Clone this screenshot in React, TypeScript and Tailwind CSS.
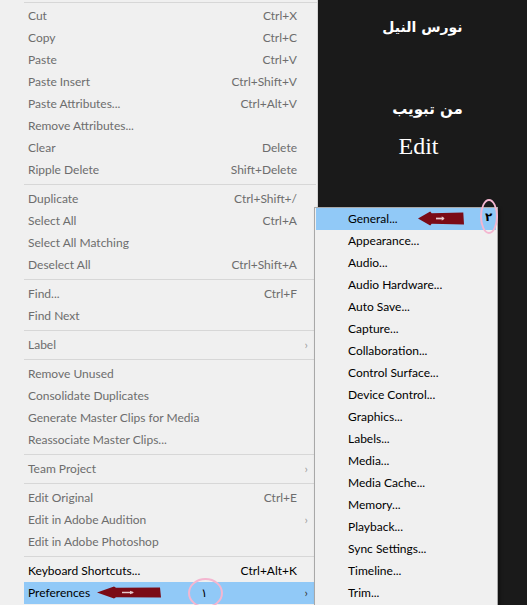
import React from 'react';

type Item =
  | { sep: true }
  | { label: string; shortcut?: string; sub?: boolean; dark?: boolean; active?: boolean };

const leftItems: Item[] = [
  { label: 'Cut', shortcut: 'Ctrl+X' },
  { label: 'Copy', shortcut: 'Ctrl+C' },
  { label: 'Paste', shortcut: 'Ctrl+V' },
  { label: 'Paste Insert', shortcut: 'Ctrl+Shift+V' },
  { label: 'Paste Attributes...', shortcut: 'Ctrl+Alt+V' },
  { label: 'Remove Attributes...' },
  { label: 'Clear', shortcut: 'Delete' },
  { label: 'Ripple Delete', shortcut: 'Shift+Delete' },
  { sep: true },
  { label: 'Duplicate', shortcut: 'Ctrl+Shift+/' },
  { label: 'Select All', shortcut: 'Ctrl+A' },
  { label: 'Select All Matching' },
  { label: 'Deselect All', shortcut: 'Ctrl+Shift+A' },
  { sep: true },
  { label: 'Find...', shortcut: 'Ctrl+F' },
  { label: 'Find Next' },
  { sep: true },
  { label: 'Label', sub: true },
  { sep: true },
  { label: 'Remove Unused' },
  { label: 'Consolidate Duplicates' },
  { label: 'Generate Master Clips for Media' },
  { label: 'Reassociate Master Clips...' },
  { sep: true },
  { label: 'Team Project', sub: true },
  { sep: true },
  { label: 'Edit Original', shortcut: 'Ctrl+E' },
  { label: 'Edit in Adobe Audition', sub: true },
  { label: 'Edit in Adobe Photoshop' },
  { sep: true },
  { label: 'Keyboard Shortcuts...', shortcut: 'Ctrl+Alt+K', dark: true },
  { label: 'Preferences', sub: true, dark: true, active: true },
];

const prefs = [
  'General...',
  'Appearance...',
  'Audio...',
  'Audio Hardware...',
  'Auto Save...',
  'Capture...',
  'Collaboration...',
  'Control Surface...',
  'Device Control...',
  'Graphics...',
  'Labels...',
  'Media...',
  'Media Cache...',
  'Memory...',
  'Playback...',
  'Sync Settings...',
  'Timeline...',
  'Trim...',
];

function Arrow({ className }: { className?: string }) {
  return (
    <svg viewBox="0 0 64 14" className={className} preserveAspectRatio="none">
      <path d="M0 7 L17 0.5 L19 2 L63 1.5 L64 12.5 L19 12 L17 13.5 Z" fill="#7b0b16" />
      <path d="M25 7 L36 7" stroke="#e8c9cc" strokeWidth="1.6" />
      <path d="M33 5 L37 7 L33 9" fill="#e8c9cc" />
    </svg>
  );
}

export default function App() {
  return (
    <div
      className="relative w-[527px] h-[605px] overflow-hidden bg-[#1a1a1a] flex"
      style={{ fontFamily: '"Segoe UI", Lato, "Noto Sans", sans-serif' }}
    >
      <div className="w-[318px] h-full bg-[#f0f0f0] border-r border-[#d4d4d4] flex flex-col text-[12px]">
        <div className="h-[5px] pl-[24px] pt-[2px]">
          <div className="h-px bg-[#d7d7d7]" />
        </div>
        {leftItems.map((it, i) =>
          'sep' in it ? (
            <div key={i} className="h-[7px] pl-[24px] pr-[1px] flex items-center">
              <div className="h-px w-full bg-[#d7d7d7]" />
            </div>
          ) : (
            <div
              key={i}
              className={`relative h-[22px] ml-[24px] mr-[3px] flex items-center pl-[4px] pr-[17px] ${
                it.active ? 'bg-[#91c9f7]' : ''
              } ${it.dark ? 'text-[#000000]' : 'text-[#6d6d6d]'}`}
            >
              <span className="flex-1 whitespace-nowrap">{it.label}</span>
              {it.shortcut && <span className="whitespace-nowrap">{it.shortcut}</span>}
              {it.sub && (
                <span className={`absolute right-[6px] text-[12px] ${it.dark ? 'text-[#333]' : 'text-[#a0a0a0]'}`}>
                  ›
                </span>
              )}
              {it.active && (
                <>
                  <Arrow className="absolute left-[73px] top-[4px] w-[64px] h-[13px]" />
                  <span className="absolute left-[164px] top-[-4px] w-[35px] h-[30px] rounded-[50%] border-2 border-[#f4b6d0]" />
                  <span className="absolute left-[177px] top-[2px] text-[12px] text-[#000]" style={{ fontFamily: '"DejaVu Sans", sans-serif' }}>
                    ١
                  </span>
                </>
              )}
            </div>
          )
        )}
      </div>

      <div className="flex-1 flex flex-col items-center text-white">
        <div className="mt-[17px] text-[14px] font-bold" style={{ fontFamily: '"DejaVu Sans", sans-serif' }} dir="rtl">
          نورس النيل
        </div>
        <div className="mt-[60px] ml-[10px] text-[15px] font-bold" style={{ fontFamily: '"DejaVu Sans", sans-serif' }} dir="rtl">
          من تبويب
        </div>
        <div className="mt-[7px] mr-[8px] text-[24px]" style={{ fontFamily: '"Liberation Serif", serif' }}>
          Edit
        </div>
      </div>

      <div className="absolute left-[314px] top-[207px] w-[184px] h-[410px] bg-[#f0f0f0] border border-[#a8a8a8] shadow-[2px_2px_3px_rgba(0,0,0,0.35)] text-[12px] text-black">
        {prefs.map((p, i) => (
          <div
            key={p}
            className={`relative h-[22px] mx-[1px] flex items-center pl-[32px] ${i === 0 ? 'bg-[#91c9f7]' : ''}`}
          >
            <span className="whitespace-nowrap">{p}</span>
            {i === 0 && (
              <>
                <Arrow className="absolute left-[102px] top-[3px] w-[46px] h-[15px]" />
                <span className="absolute left-[164px] top-[-9px] w-[18px] h-[35px] rounded-[50%] border-2 border-[#f4b6d0]" />
                <span className="absolute left-[169px] top-[0px] text-[12px] font-bold text-black" style={{ fontFamily: '"DejaVu Sans", sans-serif' }}>
                  ٢
                </span>
              </>
            )}
          </div>
        ))}
      </div>
    </div>
  );
}
